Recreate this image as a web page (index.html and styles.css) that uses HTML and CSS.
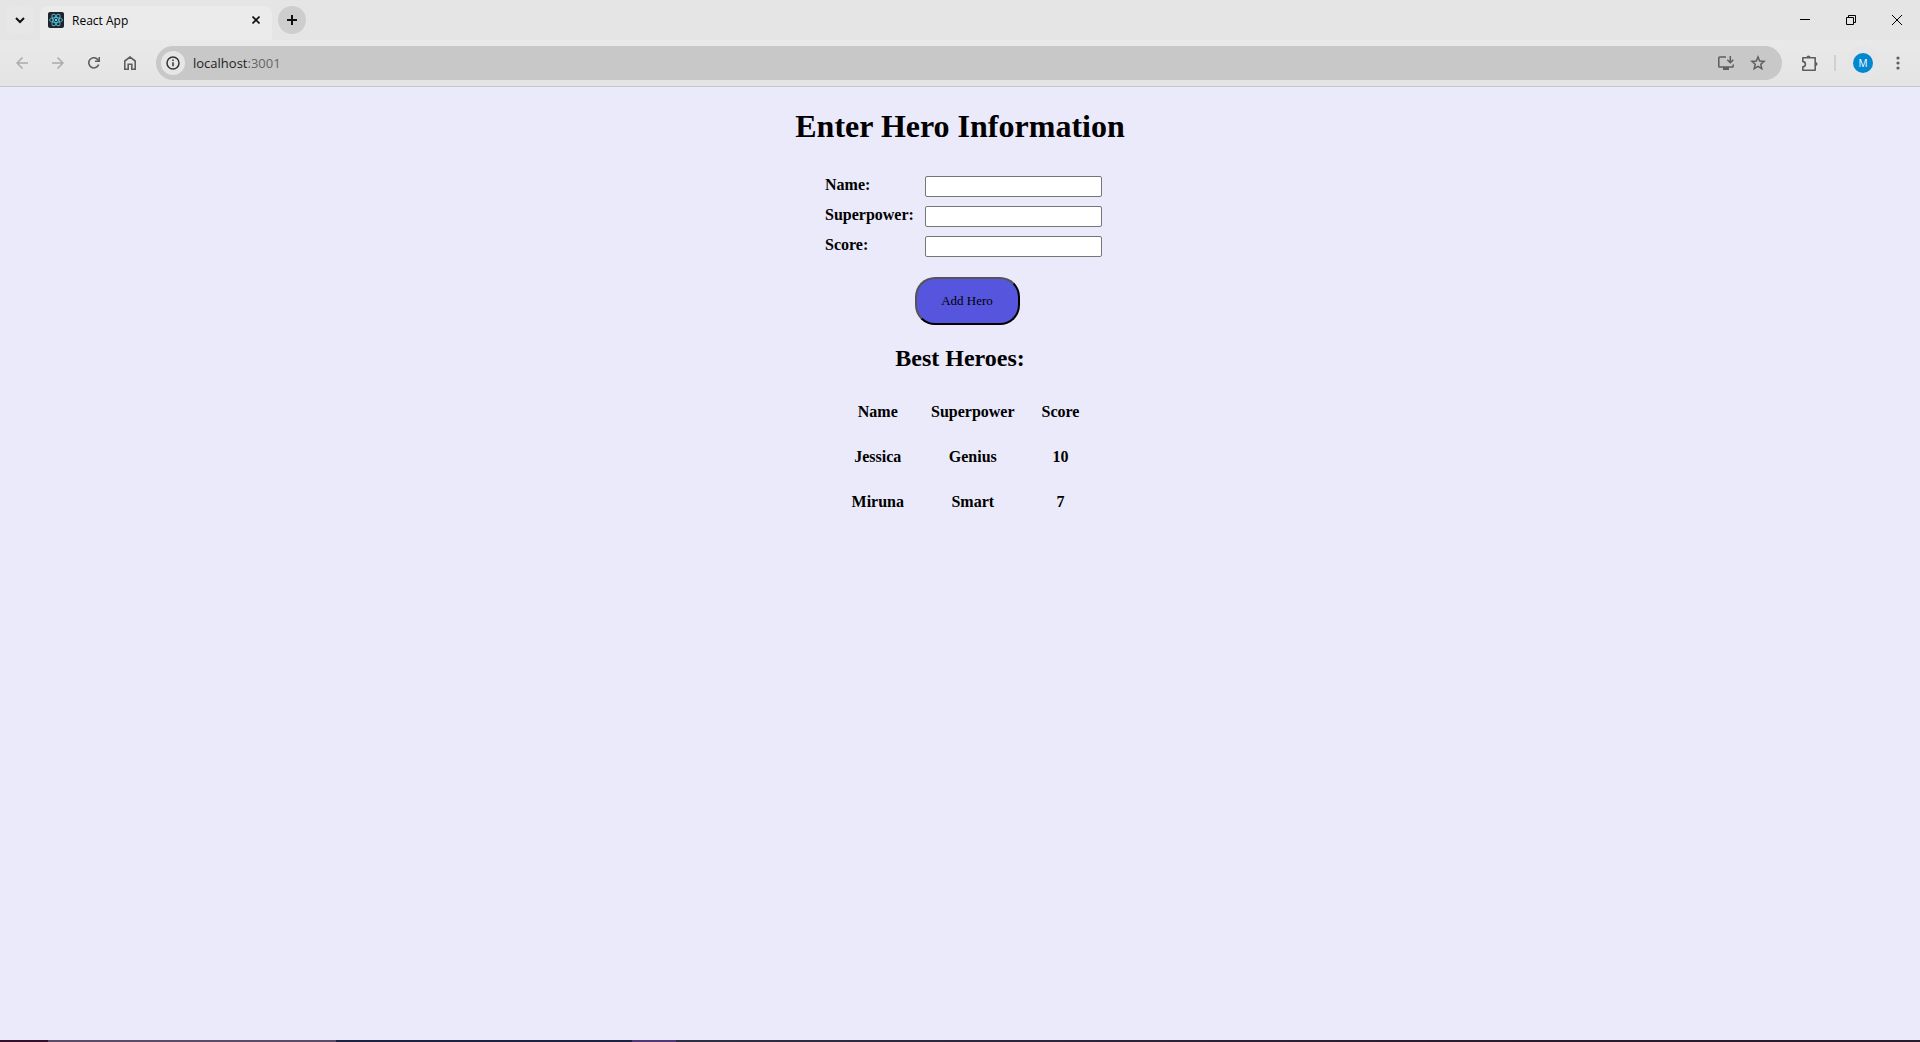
FILE: index.html
```html
<!DOCTYPE html>
<html lang="en">
<head>
<meta charset="utf-8">
<title>React App</title>
<link rel="stylesheet" href="styles.css">
</head>
<body>
<header class="browser">
  <div class="tab-strip">
    <button class="tab-search" aria-label="Search tabs">
      <svg width="10" height="8" viewBox="0 0 10 8" fill="none" stroke="#111" stroke-width="2"><path d="M1 2l4 4 4-4"/></svg>
    </button>
    <div class="tab">
      <svg class="favicon" width="16" height="16" viewBox="0 0 16 16" fill="none" stroke="#4fb4cf" stroke-width="1">
        <rect width="16" height="16" rx="2" fill="#20232a" stroke="none"/>
        <ellipse cx="8" cy="8" rx="6.5" ry="2.5"/>
        <ellipse cx="8" cy="8" rx="6.5" ry="2.5" transform="rotate(60 8 8)"/>
        <ellipse cx="8" cy="8" rx="6.5" ry="2.5" transform="rotate(120 8 8)"/>
        <circle cx="8" cy="8" r="1.2" fill="#61dafb" stroke="none"/>
      </svg>
      <span class="tab-title">React App</span>
      <button class="tab-close" aria-label="Close tab">
        <svg width="8" height="8" viewBox="0 0 8 8" stroke="#111" stroke-width="1.6"><path d="M.5.5l7 7M7.500.5l-7 7"/></svg>
      </button>
    </div>
    <button class="new-tab" aria-label="New tab">
      <svg width="10" height="10" viewBox="0 0 10 10" stroke="#111" stroke-width="2"><path d="M5 0v10M0 5h10"/></svg>
    </button>
    <div class="window-controls">
      <button class="window-button" aria-label="Minimize">
        <svg width="10" height="10" viewBox="0 0 10 10" fill="#000"><path d="M0 4h10v1H0z"/></svg>
      </button>
      <button class="window-button" aria-label="Restore">
        <svg width="10" height="10" viewBox="0 0 10 10" fill="none" stroke="#000"><path d="M.5 2.500h7v7h-7zM2.500 2.500v-2h7v7h-2"/></svg>
      </button>
      <button class="window-button" aria-label="Close">
        <svg width="10" height="10" viewBox="0 0 10 10" stroke="#000"><path d="M0 0l10 10M10 0L0 10"/></svg>
      </button>
    </div>
  </div>
  <div class="toolbar">
    <nav class="nav-buttons">
      <button class="tool disabled" aria-label="Back">
        <svg width="12" height="12" viewBox="0 0 12 12" fill="none" stroke="currentColor" stroke-width="1.500"><path d="M12 6H1M6.500.5L1 6l5.500 5.500"/></svg>
      </button>
      <button class="tool disabled" aria-label="Forward">
        <svg width="12" height="12" viewBox="0 0 12 12" fill="none" stroke="currentColor" stroke-width="1.500"><path d="M0 6h11M5.500.5L11 6l-5.500 5.500"/></svg>
      </button>
      <button class="tool" aria-label="Reload">
        <svg width="12" height="12" viewBox="0 0 12 12"><path d="M10.700 7.500A5.100 5.100 0 1 1 9.900 2.700L11 4" fill="none" stroke="currentColor" stroke-width="1.600"/><path d="M12 0v5H7V3.500h3.500V0z" fill="currentColor"/></svg>
      </button>
      <button class="tool" aria-label="Home">
        <svg width="12" height="14" viewBox="0 0 12 14" fill="none" stroke="currentColor" stroke-width="1.600"><path d="M.8 5L6 1l5.200 4v8.200H7.800V8.300H4.200v4.900H.8z"/></svg>
      </button>
    </nav>
    <div class="omnibox">
      <button class="site-info" aria-label="Site information">
        <svg width="14" height="14" viewBox="0 0 14 14" fill="none" stroke="#333" stroke-width="1.500"><circle cx="7" cy="7" r="6"/><path d="M7 6.200v4M7 3.500v1.500"/></svg>
      </button>
      <span class="url">localhost<span class="port">:3001</span></span>
      <button class="tool" aria-label="Install app">
        <svg width="16" height="14" viewBox="0 0 16 14" fill="none" stroke="currentColor" stroke-width="1.500"><path d="M8 1H1.700Q.8 1 .8 1.900v8.300q0 .9.900.9h12.600q.9 0 .9-.9V8.500M12.300 0v6M9.300 3.700l3 3 3-3"/><path d="M5 11h6v3H5z" fill="currentColor" stroke="none"/></svg>
      </button>
      <button class="tool" aria-label="Bookmark this tab">
        <svg width="16" height="16" viewBox="0 0 16 16" fill="none" stroke="currentColor" stroke-width="1.500"><path d="M8 2l1.700 4 4.400.4-3.300 2.900 1 4.300L8 11.300l-3.800 2.300 1-4.300-3.300-2.900 4.400-.4z"/></svg>
      </button>
    </div>
    <div class="browser-actions">
      <button class="tool" aria-label="Extensions">
        <svg width="17" height="17" viewBox="0 0 17 17" fill="none" stroke="currentColor" stroke-width="1.600"><path d="M1.800 2.800h12.400v12.400H1.800v-3.400a2.600 2.600 0 0 0 0-5.200z" stroke-linejoin="round"/><path d="M5.500 2.500a2 2 0 0 1 4 0zM14.500 7a2 2 0 0 1 0 4z" fill="currentColor" stroke="none"/></svg>
      </button>
      <span class="divider"></span>
      <button class="profile" aria-label="Profile"><span class="avatar">M</span></button>
      <button class="tool" aria-label="Menu">
        <svg width="4" height="14" viewBox="0 0 4 14" fill="currentColor"><circle cx="2" cy="2" r="1.600"/><circle cx="2" cy="7" r="1.600"/><circle cx="2" cy="12" r="1.600"/></svg>
      </button>
    </div>
  </div>
</header>
<main class="page">
  <h1 class="title">Enter Hero Information</h1>
  <form class="hero-form">
    <label for="name">Name:</label><input id="name" type="text">
    <label for="power">Superpower:</label><input id="power" type="text">
    <label for="score">Score:</label><input id="score" type="text">
    <button class="add-hero" type="button">Add Hero</button>
  </form>
  <h2 class="subtitle">Best Heroes:</h2>
  <table class="heroes">
    <thead>
      <tr><th>Name</th><th>Superpower</th><th>Score</th></tr>
    </thead>
    <tbody>
      <tr><td>Jessica</td><td>Genius</td><td>10</td></tr>
      <tr><td>Miruna</td><td>Smart</td><td>7</td></tr>
    </tbody>
  </table>
</main>
<footer class="taskbar-edge"></footer>
</body>
</html>
```

FILE: styles.css
```css
* { box-sizing: border-box; }

body {
  margin: 0;
  min-height: 100vh;
  display: flex;
  flex-direction: column;
  background: #eaeafa;
  color: #000;
  font-family: "Liberation Serif", serif;
  font-size: 16px;
}

button {
  padding: 0;
  border: 0;
  background: none;
  font: inherit;
  color: inherit;
}

/* Browser frame */
.browser {
  background: #e5e5e5;
  border-bottom: 1px solid #c5c5c5;
  font-family: "Open Sans", sans-serif;
}

.browser button {
  display: flex;
  align-items: center;
  justify-content: center;
  flex: none;
}

.tab-strip {
  display: flex;
  align-items: center;
  height: 40px;
}

.tab-search {
  width: 28px;
  height: 28px;
  margin: 0 6px;
  border-radius: 8px;
  background: #e7e7e7;
}

.tab {
  display: flex;
  align-items: center;
  gap: 8px;
  width: 232px;
  height: 34px;
  padding: 0 8px 6px;
  align-self: flex-end;
  border-radius: 8px 8px 0 0;
  background: #ebebeb;
  font-size: 12px;
}

.tab-title { flex: 1; }

.tab-close {
  width: 16px;
  height: 16px;
}

.new-tab {
  width: 28px;
  height: 28px;
  margin-left: 6px;
  border-radius: 50%;
  background: #cecece;
}

.window-controls {
  display: flex;
  margin-left: auto;
}

.window-button {
  width: 46px;
  height: 40px;
}

.toolbar {
  display: flex;
  align-items: center;
  height: 46px;
  background: linear-gradient(#e9e9e9, #e4e4e4);
}

.nav-buttons {
  display: flex;
  gap: 8px;
  padding: 0 12px 0 8px;
}

.tool {
  width: 28px;
  height: 28px;
  color: #5c5e61;
}

.disabled { color: #ababab; }

.omnibox {
  flex: 1;
  display: flex;
  align-items: center;
  gap: 4px;
  height: 34px;
  padding: 0 10px 0 5px;
  border-radius: 17px;
  background: #c8c8c8;
}

.site-info {
  width: 24px;
  height: 24px;
  border-radius: 50%;
  background: #e6e6e6;
}

.url {
  flex: 1;
  padding-left: 4px;
  font-size: 13px;
  color: #222;
}

.port { color: #666; }

.browser-actions {
  display: flex;
  align-items: center;
  padding: 0 8px 0 13px;
}

.divider {
  width: 2px;
  height: 16px;
  margin: 0 10px 0 11px;
  background: #d0d0d0;
}

.profile {
  width: 34px;
  height: 34px;
  margin-right: 4px;
  border-radius: 50%;
  background: #e6e6e6;
}

.avatar {
  width: 20px;
  height: 20px;
  border-radius: 50%;
  background: #0288d1;
  color: #fff;
  font-size: 10px;
  line-height: 20px;
  text-align: center;
}

/* Page */
.page {
  flex: 1;
  display: flex;
  flex-direction: column;
  align-items: center;
}

.title {
  margin: 21px 0;
  font-size: 32px;
  line-height: 37px;
}

.hero-form {
  display: grid;
  grid-template-columns: 100px 177px;
  row-gap: 9px;
  align-items: start;
  margin: 10px 0 0 7px;
  font-weight: bold;
}

.hero-form input {
  width: 100%;
  height: 21px;
  margin: 0;
  border: 1px solid #767676;
  border-radius: 2px;
  background: #fff;
}

.add-hero {
  grid-column: 1 / -1;
  justify-self: center;
  width: 105px;
  height: 48px;
  margin: 11px 0 0 7px;
  border: 2px outset #000;
  border-radius: 20px;
  background: #5555dd;
  font-size: 13px;
  font-weight: normal;
}

.subtitle {
  margin: 19px 0 16px;
  font-size: 24px;
  line-height: 28px;
}

.heroes {
  margin-left: 11px;
  border-spacing: 3px;
  font-weight: bold;
  text-align: center;
}

.heroes th,
.heroes td {
  height: 42px;
  padding: 0 12px;
}

/* Sliver of the desktop taskbar below the window */
.taskbar-edge {
  height: 2px;
  background: linear-gradient(to right, #35102c 48px, #5c4a69 48px 336px, #1d2142 336px 632px, #523777 632px 676px, #2d2e45 676px, #2a1a2e 1520px);
}
```
